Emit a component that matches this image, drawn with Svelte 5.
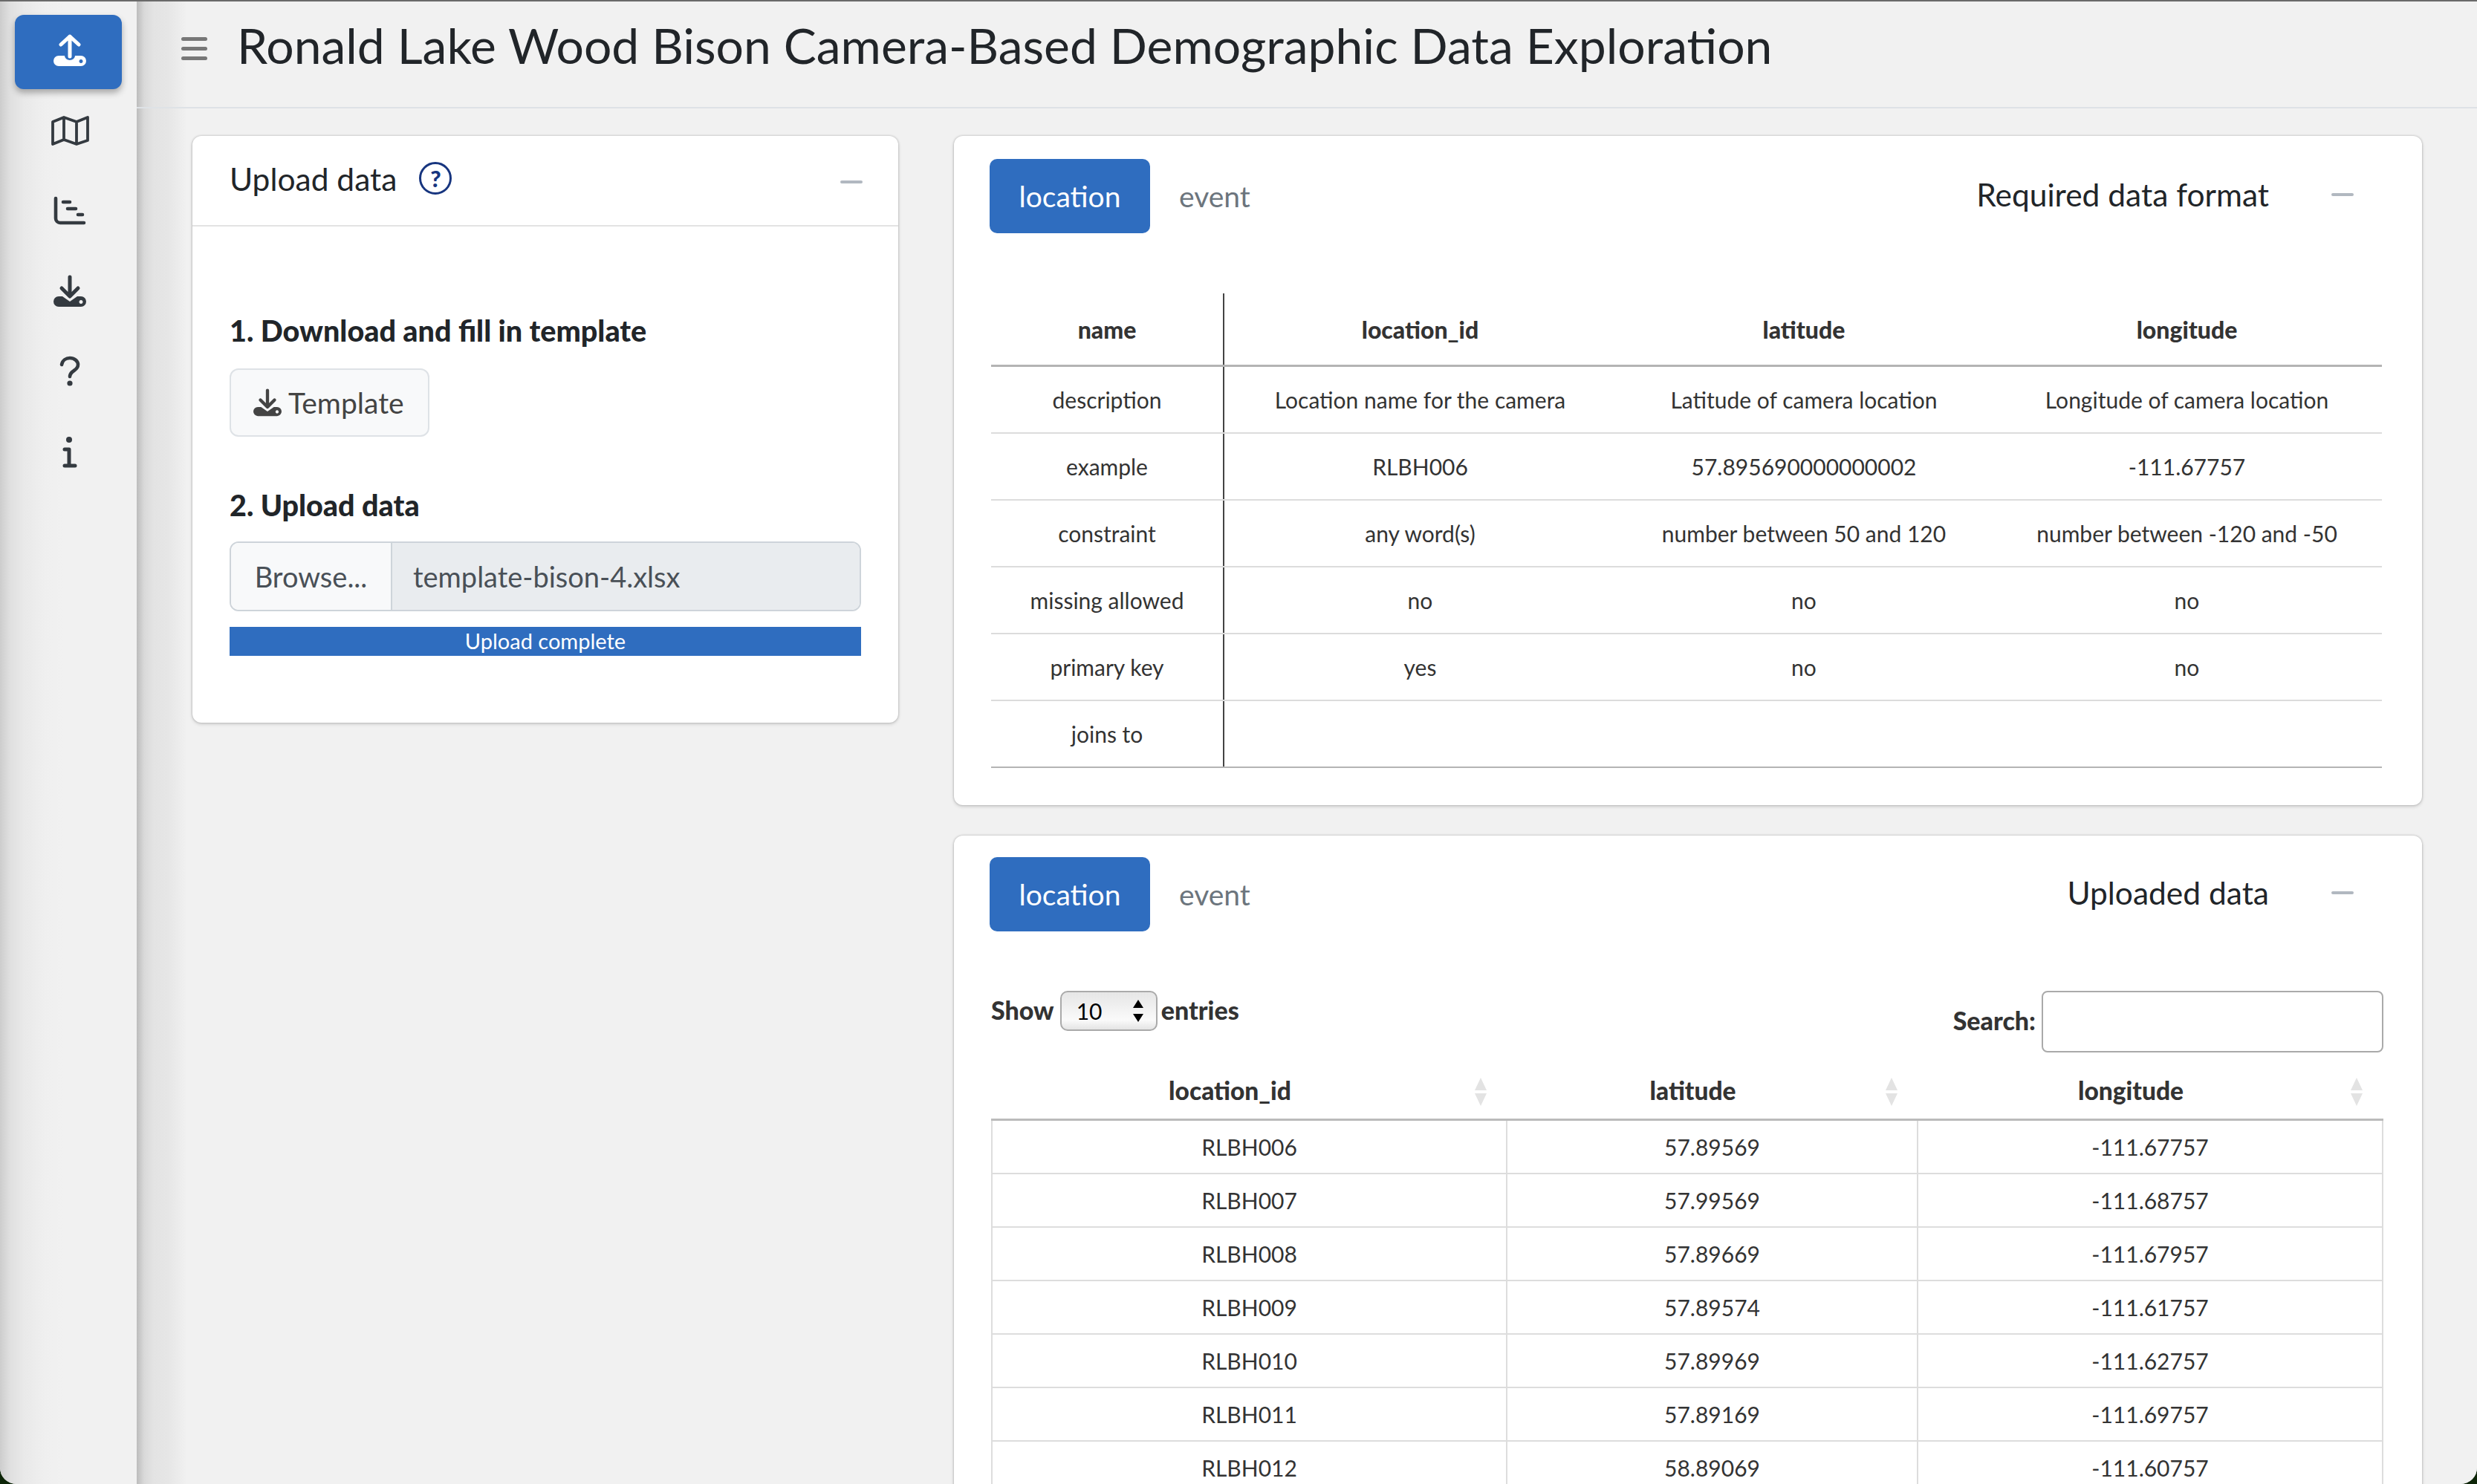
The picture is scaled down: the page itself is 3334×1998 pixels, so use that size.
<script>
    const formatCols = ['location_id', 'latitude', 'longitude']
    const formatRows = [
        ['description', 'Location name for the camera', 'Latitude of camera location', 'Longitude of camera location'],
        ['example', 'RLBH006', '57.895690000000002', '-111.67757'],
        ['constraint', 'any word(s)', 'number between 50 and 120', 'number between -120 and -50'],
        ['missing allowed', 'no', 'no', 'no'],
        ['primary key', 'yes', 'no', 'no'],
        ['joins to', '', '', '']
    ]
    const uploaded = [
        ['RLBH006', '57.89569', '-111.67757'],
        ['RLBH007', '57.99569', '-111.68757'],
        ['RLBH008', '57.89669', '-111.67957'],
        ['RLBH009', '57.89574', '-111.61757'],
        ['RLBH010', '57.89969', '-111.62757'],
        ['RLBH011', '57.89169', '-111.69757'],
        ['RLBH012', '58.89069', '-111.60757']
    ]
</script>

{#snippet download(w, h)}
    <svg width={w} height={h} viewBox="0 0 44 44">
        <path d="M22 3V28M11 18L22 29L33 18" fill="none" stroke="currentColor" stroke-width="5" stroke-linecap="round" stroke-linejoin="round" />
        <path fill-rule="evenodd" fill="currentColor" d="M7 29H12L22 36L32 29H37a7 7 0 0 1 0 14H7a7 7 0 0 1 0-14zM37 34a2.5 2.5 0 1 0 .01 0z" />
    </svg>
{/snippet}

<div class="window">
    <aside class="sidebar">
        <div class="nav-item active">
            <svg width="44" height="44" viewBox="0 0 44 44">
                <path d="M22 3V30M10 14L22 3L34 14" fill="none" stroke="currentColor" stroke-width="5" stroke-linecap="round" stroke-linejoin="round" />
                <path fill-rule="evenodd" fill="currentColor" d="M7 29H15a7 6 0 0 0 14 0H37a7 7 0 0 1 0 14H7a7 7 0 0 1 0-14zM37 34a2.5 2.5 0 1 0 .01 0z" />
            </svg>
        </div>
        <div class="nav-item">
            <svg width="51" height="40" viewBox="0 0 51 40" fill="none" stroke="currentColor" stroke-width="3.8" stroke-linejoin="round">
                <path d="M2 8L17 2L34 8L49 2V33L34 38L17 32L2 38zM17 2V32M34 8V38" />
            </svg>
        </div>
        <div class="nav-item">
            <svg width="44" height="40" viewBox="0 0 44 40" fill="none" stroke="currentColor" stroke-width="4.6" stroke-linecap="round">
                <path d="M3 3V30a6 6 0 0 0 6 6H41" />
                <path d="M13 8H22M19 17H30M33 25H39" />
            </svg>
        </div>
        <div class="nav-item">{@render download(44, 44)}</div>
        <div class="nav-item">
            <svg width="30" height="42" viewBox="0 0 30 42" fill="none" stroke="currentColor" stroke-width="4.6" stroke-linecap="round">
                <path d="M4 12C5 6 10 3 15 3C21 3 26 7 26 12C26 18 21 19 18 22C16 24 15 25 15 28" />
                <circle cx="15" cy="37" r="3.6" fill="currentColor" stroke="none" />
            </svg>
        </div>
        <div class="nav-item">
            <svg width="24" height="48" viewBox="0 0 24 48" fill="none" stroke="currentColor" stroke-width="5" stroke-linecap="round" stroke-linejoin="round">
                <circle cx="11" cy="8" r="4" fill="currentColor" stroke="none" />
                <path d="M5 21H11V42M5 43H19" />
            </svg>
        </div>
    </aside>

    <div class="main">
        <header class="topbar">
            <div class="burger"><span></span><span></span><span></span></div>
            <h1>Ronald Lake Wood Bison Camera-Based Demographic Data Exploration</h1>
        </header>

        <div class="content">
            <section class="card upload">
                <div class="card-head">
                    <span class="card-title">Upload data</span>
                    <span class="help">?</span>
                    <span class="minus"></span>
                </div>
                <div class="upload-body">
                    <h5>1. Download and fill in template</h5>
                    <button class="template">{@render download(38, 38)}<span>Template</span></button>
                    <h5 class="second">2. Upload data</h5>
                    <div class="file">
                        <span class="browse">Browse...</span>
                        <span class="filename">template-bison-4.xlsx</span>
                    </div>
                    <div class="progress">Upload complete</div>
                </div>
            </section>

            <div class="right">
                <section class="card wide">
                    <div class="tabs-head">
                        <span class="pill">location</span>
                        <span class="tab">event</span>
                        <span class="card-title push">Required data format</span>
                        <span class="minus"></span>
                    </div>
                    <table class="format">
                        <colgroup><col class="c0" /><col class="c1" /><col class="c2" /><col class="c3" /></colgroup>
                        <thead>
                            <tr>
                                <th class="key">name</th>
                                {#each formatCols as col}<th>{col}</th>{/each}
                            </tr>
                        </thead>
                        <tbody>
                            {#each formatRows as row}
                                <tr>
                                    <td class="key">{row[0]}</td>
                                    {#each row.slice(1) as cell}<td>{cell}</td>{/each}
                                </tr>
                            {/each}
                        </tbody>
                    </table>
                </section>

                <section class="card wide second-card">
                    <div class="tabs-head">
                        <span class="pill">location</span>
                        <span class="tab">event</span>
                        <span class="card-title push">Uploaded data</span>
                        <span class="minus"></span>
                    </div>
                    <div class="dt-controls">
                        <div class="dt-length">
                            <span>Show</span>
                            <div class="fake-select">
                                <span>10</span>
                                <svg width="16" height="32" viewBox="0 0 16 32"><path d="M8 1L15 12H1zM8 31L1 20H15z" /></svg>
                            </div>
                            <span>entries</span>
                        </div>
                        <label class="dt-search">
                            <span>Search:</span>
                            <input type="text" />
                        </label>
                    </div>
                    <table class="data">
                        <colgroup><col class="d0" /><col class="d1" /><col class="d2" /></colgroup>
                        <thead>
                            <tr>
                                {#each formatCols as col}
                                    <th>
                                        {col}
                                        <svg class="sort" width="18" height="40" viewBox="0 0 18 40"><path d="M9 1L17 18H1zM9 39L1 22H17z" /></svg>
                                    </th>
                                {/each}
                            </tr>
                        </thead>
                        <tbody>
                            {#each uploaded as row}
                                <tr>{#each row as cell}<td>{cell}</td>{/each}</tr>
                            {/each}
                        </tbody>
                    </table>
                </section>
            </div>
        </div>
    </div>
</div>

<style>
    :global(body) {
        background: #0d2508;
        overflow: hidden;
    }

    .window {
        display: flex;
        width: 3334px;
        height: 1998px;
        overflow: hidden;
        border-top: 2px solid #6a6a6a;
        box-sizing: border-box;
        border-radius: 0 0 22px 22px;
        background: #f1f1f1;
        font-family: Lato, "Noto Sans", sans-serif;
        color: #212529;
    }

    .sidebar {
        flex: 0 0 184px;
        display: flex;
        flex-direction: column;
        gap: 8px;
        box-sizing: border-box;
        padding: 18px 20px 0;
        background: linear-gradient(90deg, #cdcdcd 0, #e0e0e0 14px, #e9e9e9 32px, #efefef 60px, #f1f1f1 85px);
    }

    .nav-item {
        display: flex;
        align-items: center;
        justify-content: center;
        box-sizing: border-box;
        height: 100px;
        padding: 0 0 5px 4px;
        color: #343a40;
        border-radius: 12px;
    }

    .nav-item.active {
        background: #2f6dbf;
        color: #fff;
        box-shadow: 0 5px 8px rgba(0, 0, 0, 0.3);
    }

    .main {
        flex: 1;
        min-width: 0;
        background: linear-gradient(90deg, #bcbcbc 0, #d9d9d9 10px, #e3e3e3 22px, #e6e6e6 42px, #f1f1f1 68px);
    }

    .topbar {
        display: flex;
        align-items: center;
        box-sizing: border-box;
        height: 144px;
        padding: 0 0 24px 60px;
        border-bottom: 2px solid #dee2e6;
    }

    .burger {
        display: flex;
        flex-direction: column;
        gap: 8px;
        width: 35px;
        margin: 8px 40px 0 0;
    }

    .burger span {
        height: 5px;
        border-radius: 2.5px;
        background: #777;
    }

    h1 {
        margin: 0;
        font-size: 66px;
        font-weight: 400;
        line-height: 1.2;
    }

    .content {
        display: grid;
        grid-template-columns: 950px 1976px;
        column-gap: 75px;
        align-items: start;
        padding: 37px 0 0 75px;
    }

    .card {
        background: #fff;
        border-radius: 12px;
        box-shadow: 0 0 3px rgba(0, 0, 0, 0.25), 0 2px 5px rgba(0, 0, 0, 0.14);
    }

    .card-head {
        display: flex;
        align-items: center;
        height: 122px;
        box-sizing: border-box;
        padding: 0 48px 6px 50px;
        border-bottom: 2px solid #e3e3e3;
    }

    .card-title {
        font-size: 42.5px;
        line-height: 1.2;
    }

    .help {
        display: flex;
        align-items: center;
        justify-content: center;
        box-sizing: border-box;
        width: 44px;
        height: 44px;
        margin-left: 30px;
        border: 3.5px solid #17357f;
        border-radius: 50%;
        color: #17357f;
        font-size: 31px;
        font-weight: 900;
    }

    .minus {
        width: 30px;
        height: 4px;
        margin: 10px 0 0 auto;
        border-radius: 2px;
        background: #b1b8c0;
    }

    .upload-body {
        box-sizing: border-box;
        height: 668px;
        padding: 115px 50px 0;
    }

    h5 {
        margin: 0;
        font-size: 39.5px;
        font-weight: 900;
        line-height: 50px;
    }

    .second {
        margin-top: 67px;
    }

    .template {
        display: flex;
        align-items: center;
        gap: 9px;
        box-sizing: border-box;
        width: 269px;
        height: 92px;
        margin-top: 26px;
        padding: 0 0 0 30px;
        border: 2px solid #dee2e6;
        border-radius: 12px;
        background: #f8f9fa;
        color: #444;
        font: inherit;
        font-size: 39px;
    }

    .file {
        display: flex;
        height: 94px;
        margin-top: 24px;
        box-sizing: border-box;
        border: 2px solid #ced4da;
        border-radius: 12px;
        overflow: hidden;
        font-size: 38px;
        color: #495057;
    }

    .browse {
        display: flex;
        align-items: center;
        justify-content: center;
        width: 215px;
        background: #f8f9fa;
        border-right: 2px solid #ced4da;
    }

    .filename {
        display: flex;
        flex: 1;
        align-items: center;
        padding-left: 28px;
        background: #e9ecef;
    }

    .progress {
        height: 39px;
        margin-top: 21px;
        background: #2f6dbf;
        color: #fff;
        font-size: 29px;
        line-height: 38px;
        text-align: center;
    }

    .right {
        display: flex;
        flex-direction: column;
        gap: 41px;
    }

    .wide {
        box-sizing: border-box;
        height: 901px;
        padding: 31px 52px 0 48px;
    }

    .second-card {
        height: auto;
        padding-top: 29px;
        padding-bottom: 60px;
    }

    .tabs-head {
        display: flex;
        align-items: center;
        height: 100px;
    }

    .pill {
        display: flex;
        align-items: center;
        justify-content: center;
        width: 216px;
        height: 100px;
        border-radius: 10px;
        background: #2f6dbf;
        color: #fff;
        font-size: 39px;
    }

    .tab {
        margin-left: 39px;
        color: #6c757d;
        font-size: 39px;
    }

    .push {
        margin: 0 84px 6px auto;
    }

    .tabs-head .minus {
        margin: 0 40px 4px 0;
    }

    table {
        width: 1872px;
        margin-left: 2px;
        border-collapse: collapse;
        table-layout: fixed;
        color: #333;
        font-size: 30px;
    }

    th {
        font-weight: 900;
        text-align: center;
    }

    td {
        text-align: center;
    }

    .format {
        margin-top: 81px;
    }

    .format th {
        height: 96px;
        padding: 0;
        border-bottom: 3px solid #b4b4b4;
        font-size: 32px;
    }

    .format td {
        height: 88px;
        padding: 0;
        border-bottom: 2px solid #dcdcdc;
    }

    .format tr:last-child td {
        border-bottom-color: #b4b4b4;
    }

    .format .key {
        border-right: 2px solid #444;
    }

    .c0 { width: 313px; }
    .c1 { width: 528px; }
    .c2 { width: 506px; }
    .c3 { width: 525px; }

    .dt-controls {
        display: flex;
        justify-content: space-between;
        align-items: flex-start;
        margin: 80px 0 0 2px;
        width: 1874px;
        color: #333;
        font-size: 34px;
        font-weight: 900;
    }

    .dt-length {
        display: flex;
        align-items: center;
        gap: 6px;
    }

    .dt-length > span {
        margin-bottom: 4px;
    }

    .fake-select {
        display: flex;
        align-items: center;
        justify-content: space-between;
        box-sizing: border-box;
        width: 131px;
        height: 54px;
        margin: 0 -1px 0 2px;
        padding: 0 16px 0 20px;
        border: 2px solid #aaa;
        border-radius: 10px;
        background: linear-gradient(180deg, #e6e6e6, #fafafa 75%, #e4e4e4);
        color: #000;
        font-size: 30px;
        font-weight: 400;
    }

    .dt-search {
        display: flex;
        align-items: center;
        gap: 8px;
    }

    .dt-search > span {
        margin-bottom: 4px;
    }

    .dt-search input {
        box-sizing: border-box;
        width: 460px;
        height: 83px;
        border: 2px solid #aaa;
        border-radius: 8px;
        background: #fff;
    }

    .data {
        margin-top: 13px;
    }

    .data th {
        position: relative;
        height: 76px;
        padding: 0 52px 0 0;
        border-bottom: 3px solid #bbb;
        font-size: 33.5px;
    }

    .data td {
        height: 70px;
        padding: 0;
        border: 2px solid #ddd;
        border-top: 0;
    }

    .d0 { width: 693px; }
    .d1 { width: 553px; }
    .d2 { width: 626px; }

    .sort {
        position: absolute;
        top: 20px;
        right: 26px;
        fill: #e3e3e3;
    }
</style>
